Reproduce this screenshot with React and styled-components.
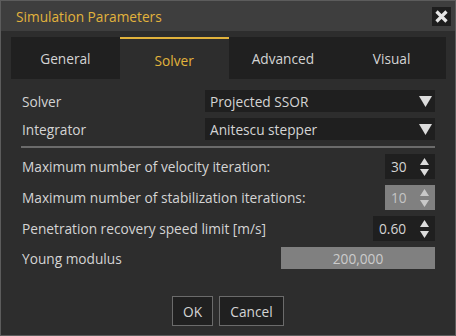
import React from 'react'
import styled, { createGlobalStyle } from 'styled-components'

const GlobalStyle = createGlobalStyle`
  html, body {
    margin: 0;
    padding: 0;
    background: #2d2d2d;
  }
  * {
    box-sizing: border-box;
  }
`

const YELLOW = '#e2b33c'
const TEXT = '#d4d4d4'

const Window = styled.div`
  width: 456px;
  height: 336px;
  display: flex;
  flex-direction: column;
  background: #2d2d2d;
  border: 1px solid #5c5c5c;
  font-family: 'Open Sans', 'Noto Sans', sans-serif;
  font-size: 13.7px;
  color: ${TEXT};
`
const TitleBar = styled.div`
  height: 30px;
  flex-shrink: 0;
  display: flex;
  align-items: center;
  justify-content: space-between;
  padding: 0 4px 0 15px;
  background: #3e3e3e;
`
const Title = styled.span`
  color: ${YELLOW};
`
const CloseButton = styled.div`
  width: 19px;
  height: 19px;
  margin-top: 1px;
  display: flex;
  align-items: center;
  justify-content: center;
  background: #1e1e1e;
`
const Tabs = styled.div`
  display: grid;
  grid-template-columns: repeat(4, 1fr);
  height: 42px;
  margin: 6px 9px 0 10px;
  background: #202020;
`
const Tab = styled.div`
  display: flex;
  align-items: center;
  justify-content: center;
  padding-top: ${p => (p.$active ? '3px' : '0')};
  background: ${p => (p.$active ? '#2d2d2d' : '#202020')};
  border-top: ${p => (p.$active ? `2px solid ${YELLOW}` : 'none')};
  color: ${p => (p.$active ? YELLOW : TEXT)};
`
const Form = styled.div`
  display: flex;
  flex-direction: column;
  padding: 11px 20px 0 20px;
`
const ComboRow = styled.div`
  display: grid;
  grid-template-columns: 1fr 230px;
  align-items: center;
  height: 22px;
  margin-bottom: 6px;
`
const Combo = styled.div`
  height: 22px;
  display: flex;
  align-items: center;
  justify-content: space-between;
  padding: 0 3px 0 5px;
  background: #1f1f1f;
`
const Separator = styled.div`
  height: 2px;
  margin: 0 0 6px;
  background: #6b6b6b;
`
const FieldRow = styled.div`
  display: flex;
  align-items: center;
  justify-content: space-between;
  height: ${p => p.$height || 25}px;
  margin-bottom: ${p => p.$gap ?? 6}px;
`
const Label = styled.span`
  padding-left: 1px;
`
const Spin = styled.div`
  width: ${p => p.$width}px;
  height: 25px;
  display: flex;
  align-items: center;
  justify-content: space-between;
  padding: 0 6px 0 6px;
  background: ${p => (p.$disabled ? '#808080' : '#1f1f1f')};
  color: ${p => (p.$disabled ? '#c4c4c4' : TEXT)};
`
const Arrows = styled.div`
  display: flex;
  flex-direction: column;
  gap: 4px;
`
const ReadOnly = styled.div`
  width: 154px;
  height: 22px;
  display: flex;
  align-items: center;
  justify-content: center;
  background: #808080;
  color: #cccccc;
`
const Footer = styled.div`
  margin-top: auto;
  padding-bottom: 9px;
  display: flex;
  justify-content: center;
  gap: 6px;
`
const Button = styled.div`
  height: 30px;
  min-width: ${p => p.$width}px;
  display: flex;
  align-items: center;
  justify-content: center;
  background: #202020;
  border: 1px solid #6b6b6b;
  color: ${TEXT};
`

const DropArrow = () => (
  <svg width="13" height="12" viewBox="0 0 13 12">
    <polygon points="0,1 13,1 6.5,12" fill="#dcdcdc" />
  </svg>
)

const SpinArrows = ({ color = '#dcdcdc' }) => (
  <Arrows>
    <svg width="9" height="7" viewBox="0 0 9 7">
      <polygon points="4.5,0 9,7 0,7" fill={color} />
    </svg>
    <svg width="9" height="7" viewBox="0 0 9 7">
      <polygon points="0,0 9,0 4.5,7" fill={color} />
    </svg>
  </Arrows>
)

export default function App() {
  return (
    <>
      <GlobalStyle />
      <Window>
        <TitleBar>
          <Title>Simulation Parameters</Title>
          <CloseButton>
            <svg width="13" height="13" viewBox="0 0 13 13">
              <path d="M1.5 1.5 L11.5 11.5 M11.5 1.5 L1.5 11.5" stroke="#e6e6e6" strokeWidth="3.2" />
            </svg>
          </CloseButton>
        </TitleBar>
        <Tabs>
          <Tab>General</Tab>
          <Tab $active>Solver</Tab>
          <Tab>Advanced</Tab>
          <Tab>Visual</Tab>
        </Tabs>
        <Form>
          <ComboRow>
            <Label>Solver</Label>
            <Combo>
              Projected SSOR
              <DropArrow />
            </Combo>
          </ComboRow>
          <ComboRow>
            <Label>Integrator</Label>
            <Combo>
              Anitescu stepper
              <DropArrow />
            </Combo>
          </ComboRow>
          <Separator />
          <FieldRow>
            <Label>Maximum number of velocity iteration:</Label>
            <Spin $width={50}>
              30
              <SpinArrows />
            </Spin>
          </FieldRow>
          <FieldRow $gap={6}>
            <Label>Maximum number of stabilization iterations:</Label>
            <Spin $width={50} $disabled>
              10
              <SpinArrows color="#c8c8c8" />
            </Spin>
          </FieldRow>
          <FieldRow $gap={6}>
            <Label>Penetration recovery speed limit [m/s]</Label>
            <Spin $width={62}>
              0.60
              <SpinArrows />
            </Spin>
          </FieldRow>
          <FieldRow $height={22}>
            <Label>Young modulus</Label>
            <ReadOnly>200,000</ReadOnly>
          </FieldRow>
        </Form>
        <Footer>
          <Button $width={41}>OK</Button>
          <Button $width={65}>Cancel</Button>
        </Footer>
      </Window>
    </>
  )
}
